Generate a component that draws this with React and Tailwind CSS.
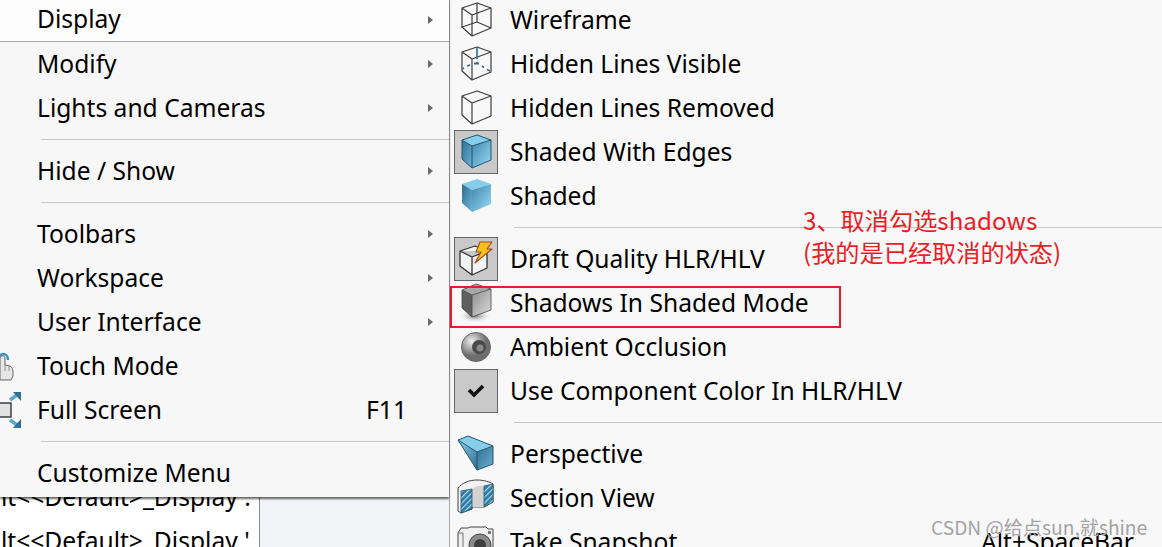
import React from 'react';

const ui = { fontFamily: '"Noto Sans", sans-serif' };
const cjk = { fontFamily: '"Noto Sans CJK SC", sans-serif' };

const Arrow = () => (
  <span className="ml-auto mr-[16px] h-0 w-0 border-y-4 border-l-[5px] border-y-transparent border-l-[#6a6a6a]" />
);

// Left menu row
const MenuRow = ({ label, arrow, shortcut, icon, top }) => (
  <div className={`relative flex h-11 items-center pl-[37px] ${top ? 'border-b border-[#ababab] bg-[#fdfdfd]' : ''}`}>
    {icon}
    <span>{label}</span>
    {arrow && <Arrow />}
    {shortcut && <span className="ml-auto mr-[42px]">{shortcut}</span>}
  </div>
);

const LeftSep = () => (
  <div className="flex h-[19px] items-center pl-[41px]">
    <div className="h-px w-full bg-[#c8c8c8]" />
  </div>
);

const RightSep = () => (
  <div className="flex h-[19px] items-center pl-[64px]">
    <div className="h-px w-full bg-[#c8c8c8]" />
  </div>
);

// Right submenu row
const SubRow = ({ label, icon, active, shortcut }) => (
  <div className="flex h-11 items-center pl-1">
    <div className={`flex h-11 w-11 shrink-0 items-center justify-center ${active ? 'border border-[#666] bg-[#c9c9c9]' : ''}`}>
      {icon}
    </div>
    <span className="ml-3">{label}</span>
    {shortcut && <span className="ml-auto mr-[28px]">{shortcut}</span>}
  </div>
);

const Svg = ({ children }) => (
  <svg width="44" height="44" viewBox="0 0 44 44" className="shrink-0" fill="none">{children}</svg>
);

const line = { stroke: '#3d3d3d', strokeWidth: 1.2, strokeLinejoin: 'round' };

const WireframeIcon = () => (
  <Svg>
    <path d="M8 10L23 5L37 10L18 17ZM18 17V38M8 10V29L18 38L37 30V10" {...line} />
    <path d="M23 5V24M23 24L8 29M23 24L37 30" {...line} />
  </Svg>
);

const HiddenVisibleIcon = () => (
  <Svg>
    <path d="M8 10L23 5L37 10L18 17ZM18 17V38M8 10V29L18 38L37 30V10" {...line} />
    <path d="M23 6V17M23 20V22" stroke="#2b6f96" strokeWidth="1.6" />
    <path d="M8 27L10 26M13 24L16 23M20 21.5H25M28 24L30 25.5M33 27.5L36 29" stroke="#2b6f96" strokeWidth="1.8" />
  </Svg>
);

const HiddenRemovedIcon = () => (
  <Svg>
    <path d="M8 10L23 5L37 10L18 17ZM18 17V38M8 10V29L18 38L37 30V10" {...line} />
  </Svg>
);

const BlueCube = ({ edges, id }) => (
  <Svg>
    <defs>
      <linearGradient id={`${id}l`} x1="0" y1="0" x2="1" y2="1">
        <stop offset="0" stopColor="#2f6d92" />
        <stop offset="1" stopColor="#6fb4d6" />
      </linearGradient>
      <linearGradient id={`${id}r`} x1="0" y1="0" x2="1" y2="1">
        <stop offset="0" stopColor="#3d85aa" />
        <stop offset="1" stopColor="#9adcf6" />
      </linearGradient>
    </defs>
    <path d="M8 10L23 5L37 10L18 16Z" fill="#86cde9" />
    <path d="M8 10L18 16V38L8 29Z" fill={`url(#${id}l)`} />
    <path d="M18 16L37 10V30L18 38Z" fill={`url(#${id}r)`} />
    {edges && <path d="M8 10L23 5L37 10V30L18 38L8 29ZM8 10L18 16L37 10M18 16V38" stroke="#24536e" strokeWidth="1" strokeLinejoin="round" />}
  </Svg>
);

const DraftIcon = () => (
  <Svg>
    <path d="M6 14L21 9L33 14V31L18 38L6 29ZM6 14L18 20L33 14M18 20V38" stroke="#333" strokeWidth="1.3" fill="#f3f3f3" strokeLinejoin="round" />
    <path d="M26 5H38L33 12H38L21 26L27 15H22Z" fill="#f5c21b" stroke="#a5481a" strokeWidth="1.1" strokeLinejoin="round" />
  </Svg>
);

const ShadowCubeIcon = () => (
  <Svg>
    <defs>
      <linearGradient id="sr" x1="0" y1="0" x2="1" y2="1">
        <stop offset="0" stopColor="#8d8d8d" />
        <stop offset="1" stopColor="#dcdcdc" />
      </linearGradient>
      <radialGradient id="ss">
        <stop offset="0" stopColor="#777" />
        <stop offset="1" stopColor="#f8f8f8" stopOpacity="0" />
      </radialGradient>
    </defs>
    <ellipse cx="21" cy="35" rx="17" ry="7" fill="url(#ss)" />
    <path d="M8 9L22 3L37 8L18 14Z" fill="#a8a8a8" />
    <path d="M8 9L18 14V36L8 27Z" fill="#5f5f5f" />
    <path d="M18 14L37 8V29L18 36Z" fill="url(#sr)" />
    <path d="M8 9L22 3L37 8V29L18 36L8 27ZM8 9L18 14L37 8M18 14V36" stroke="#444" strokeWidth="0.8" strokeLinejoin="round" />
  </Svg>
);

const AmbientIcon = () => (
  <Svg>
    <defs>
      <radialGradient id="ao" cx="0.35" cy="0.3">
        <stop offset="0" stopColor="#f0f0f0" />
        <stop offset="1" stopColor="#6e6e6e" />
      </radialGradient>
    </defs>
    <circle cx="22" cy="22" r="14.5" fill="url(#ao)" stroke="#666" />
    <circle cx="25" cy="22" r="7" fill="#4a4a4a" />
    <circle cx="26" cy="23" r="3.5" fill="#8a8a8a" />
  </Svg>
);

const CheckIcon = () => (
  <Svg>
    <path d="M15 21L20 26L29 17" stroke="#111" strokeWidth="3.6" />
  </Svg>
);

const PerspectiveIcon = () => (
  <Svg>
    <defs>
      <linearGradient id="pf" x1="0" y1="0" x2="1" y2="1">
        <stop offset="0" stopColor="#2f6d92" />
        <stop offset="1" stopColor="#6fb0d0" />
      </linearGradient>
      <linearGradient id="pl" x1="0" y1="0" x2="1" y2="1">
        <stop offset="0" stopColor="#8fd0ea" />
        <stop offset="1" stopColor="#2f6d92" />
      </linearGradient>
    </defs>
    <path d="M4 8L14 4L39 14L23 20Z" fill="#86cde9" />
    <path d="M4 8L23 20V38Z" fill="url(#pl)" />
    <path d="M23 20L39 14V32L23 38Z" fill="url(#pf)" />
    <path d="M4 8L14 4L39 14V32L23 38ZM4 8L23 20L39 14M23 20V38" stroke="#24536e" strokeWidth="1" strokeLinejoin="round" />
  </Svg>
);

const SectionIcon = () => (
  <Svg>
    <defs>
      <pattern id="hatch" width="4" height="4" patternUnits="userSpaceOnUse" patternTransform="rotate(45)">
        <rect width="4" height="4" fill="#2f7ba3" />
        <rect width="1.2" height="4" fill="#a8dcef" />
      </pattern>
    </defs>
    <path d="M4 12C8 7 15 4 23 4C30 4 36 6 39 8V26L30 31H18V33L7 37L4 35Z" fill="#f2f2f2" stroke="#444" strokeWidth="1" />
    <path d="M18 13C21 10 27 9 30 10V31H18Z" fill="#d2d2d2" />
    <path d="M7 15L18 13V33L7 37Z" fill="url(#hatch)" stroke="#24536e" strokeWidth="0.8" />
    <path d="M30 10L39 8V26L30 31Z" fill="url(#hatch)" stroke="#24536e" strokeWidth="0.8" />
  </Svg>
);

const CameraIcon = () => (
  <Svg>
    <path d="M4 13L7 8H14L16 7H32L34 9H39V40H4Z" fill="#f0f0f0" stroke="#444" strokeWidth="1" />
    <path d="M9 13V40M4 13H9" stroke="#777" strokeWidth="1" />
    <circle cx="26" cy="25" r="11" fill="#8a8a8a" stroke="#444" />
    <circle cx="26" cy="25" r="6" fill="#3f3f3f" />
    <rect x="34" y="11" width="3" height="3" fill="#777" />
  </Svg>
);

const HandIcon = () => (
  <svg width="14" height="30" viewBox="0 0 14 30" fill="none" className="absolute left-0 top-[7px]">
    <path d="M-1 9C-1 1 8 1 8 9" stroke="#3f95c6" strokeWidth="2.6" />
    <path d="M0 29V7C0 4 5 4 5 7V14L10 15C12 16 13 18 13 21V25L11 29Z" fill="#e6e6e6" stroke="#666" strokeWidth="1" />
    <path d="M5 14V20M9 15V20" stroke="#777" strokeWidth="0.8" />
  </svg>
);

const FullScreenIcon = () => (
  <svg width="22" height="38" viewBox="0 0 22 38" fill="none" className="absolute left-0 top-[3px]">
    <rect x="-4" y="12" width="15" height="14" fill="#e2e2e2" stroke="#333" strokeWidth="1.4" />
    <path d="M10 9L17 4" stroke="#5fa5cc" strokeWidth="3.5" />
    <path d="M13 1H21V10Z" fill="#2f6f94" />
    <path d="M10 29L17 34" stroke="#5fa5cc" strokeWidth="3.5" />
    <path d="M13 37H21V28Z" fill="#2f6f94" />
  </svg>
);

export default function App() {
  return (
    <div className="relative flex h-[547px] w-[1162px] overflow-hidden bg-[#f8f8f8] text-[24.6px] leading-none text-black" style={ui}>
      {/* Context menu + what sits below it */}
      <div className="flex w-[450px] shrink-0 flex-col border-r border-[#a8a8a8]">
        <div className="relative z-10 -mt-0.5 bg-[#f7f7f7] pb-[2px] shadow-[0_2px_2px_rgba(0,0,0,0.6)]">
          <MenuRow label="Display" arrow top />
          <MenuRow label="Modify" arrow />
          <MenuRow label="Lights and Cameras" arrow />
          <LeftSep />
          <MenuRow label="Hide / Show" arrow />
          <LeftSep />
          <MenuRow label="Toolbars" arrow />
          <MenuRow label="Workspace" arrow />
          <MenuRow label="User Interface" arrow />
          <MenuRow label="Touch Mode" icon={<HandIcon />} />
          <MenuRow label="Full Screen" shortcut="F11" icon={<FullScreenIcon />} />
          <LeftSep />
          <MenuRow label="Customize Menu" />
        </div>
        <div className="flex min-h-0 flex-1">
          <div className="-mt-[22px] w-[260px] shrink-0 overflow-hidden whitespace-nowrap border-r border-[#8a8a8a] bg-white">
            <div className="flex h-11 items-center pl-[1px]">lt&lt;&lt;Default&gt;_Display :</div>
            <div className="flex h-11 items-center pl-[1px]">lt&lt;&lt;Default&gt;_Display '</div>
          </div>
          <div className="flex-1 bg-[#f3f4f7]" />
        </div>
      </div>

      {/* Display submenu */}
      <div className="-mt-0.5 flex-1">
        <SubRow label="Wireframe" icon={<WireframeIcon />} />
        <SubRow label="Hidden Lines Visible" icon={<HiddenVisibleIcon />} />
        <SubRow label="Hidden Lines Removed" icon={<HiddenRemovedIcon />} />
        <SubRow label="Shaded With Edges" active icon={<BlueCube edges id="a" />} />
        <SubRow label="Shaded" icon={<BlueCube id="b" />} />
        <RightSep />
        <SubRow label="Draft Quality HLR/HLV" active icon={<DraftIcon />} />
        <SubRow label="Shadows In Shaded Mode" icon={<ShadowCubeIcon />} />
        <SubRow label="Ambient Occlusion" icon={<AmbientIcon />} />
        <SubRow label="Use Component Color In HLR/HLV" active icon={<CheckIcon />} />
        <RightSep />
        <SubRow label="Perspective" icon={<PerspectiveIcon />} />
        <SubRow label="Section View" icon={<SectionIcon />} />
        <SubRow label="Take Snapshot" shortcut="Alt+SpaceBar" icon={<CameraIcon />} />
      </div>

      {/* Red annotation laid over the screenshot */}
      <div className="absolute left-[450px] top-[286px] h-[42px] w-[391px] border-2 border-[#e81c2a]" />
      <div className="absolute left-[803px] top-[204px] text-[24.2px] leading-[32px] text-[#ee1c25] whitespace-nowrap" style={cjk}>
        <div>3、取消勾选shadows</div>
        <div>(我的是已经取消的状态)</div>
      </div>

      {/* Watermark */}
      <div className="absolute left-[931px] top-[516px] text-[19.2px] leading-[22px] text-[#a3a3a3] whitespace-nowrap" style={cjk}>
        CSDN @给点sun,就shine
      </div>
    </div>
  );
}
